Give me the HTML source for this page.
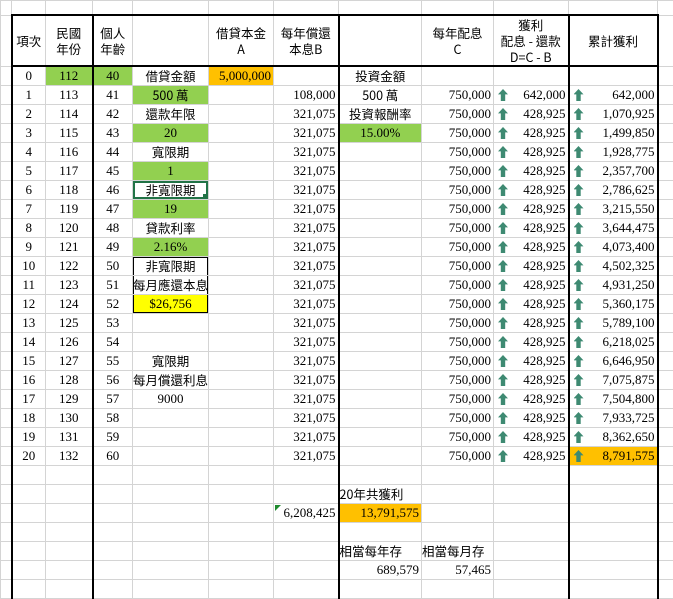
<!DOCTYPE html>
<html><head><meta charset="utf-8">
<style>
html,body{margin:0;padding:0;background:#fff;}
body{width:673px;height:593px;overflow:hidden;}
table{border-collapse:collapse;table-layout:fixed;width:673px;font-family:"Liberation Serif","Noto Sans CJK TC",serif;font-size:13px;color:#000;}
td{border:1px solid #d4d4d4;padding:0 2px;white-space:nowrap;overflow:hidden;height:18px;line-height:18px;position:relative;}
tr.top td{height:13px;line-height:13px;}
tr.h td{height:49px;line-height:16px;text-align:center;border-top:2px solid #000;border-bottom:2px solid #000;font-family:"Noto Sans CJK TC","Liberation Sans",sans-serif;font-size:12.5px;}
tr.h td:first-child,tr.h td:last-child{border-top:1px solid #d4d4d4;border-bottom:1px solid #d4d4d4;}
tr.h td:nth-child(2),tr.h td:nth-child(4),tr.h td:nth-child(8),tr.h td:nth-child(11),tr.h td:nth-child(12),
tr.d td:nth-child(2),tr.d td:nth-child(4),tr.d td:nth-child(8),tr.d td:nth-child(11),tr.d td:nth-child(12){border-left:2px solid #000;}
.c{text-align:center;}.r{text-align:right;}.l{text-align:left;}
.k{font-family:"Noto Sans CJK TC","Liberation Sans",sans-serif;font-size:12.5px;padding:0;}
.g{background:#92d050;}.o{background:#ffc000;}.y{background:#ffff00;}
.ar{position:absolute;left:4px;top:3px;width:10px;height:12px;background:#3e8a72;clip-path:polygon(50% 0,100% 45%,72% 45%,72% 100%,28% 100%,28% 45%,0 45%);}
.sel{box-shadow:inset 0 0 0 2px #217346;}
.sel i{position:absolute;right:0;bottom:0;width:5px;height:5px;background:#217346;}
.b1{box-shadow:inset 1px 1px 0 #000,inset -1px 0 0 #000;}
.b2{box-shadow:inset 1px 0 0 #000,inset -1px 0 0 #000;}
.b3{box-shadow:inset 1px -1px 0 #000,inset -1px 0 0 #000;}
.tri{position:absolute;left:1px;top:1px;width:0;height:0;border-top:6px solid #1e8a2e;border-right:6px solid transparent;}
</style></head><body>
<table>
<colgroup><col style="width:11px"><col style="width:34px"><col style="width:47px"><col style="width:40px"><col style="width:76px"><col style="width:65px"><col style="width:65px"><col style="width:83px"><col style="width:72px"><col style="width:75px"><col style="width:89px"><col style="width:16px"></colgroup>
<tr class="top"><td></td><td></td><td></td><td></td><td></td><td></td><td></td><td></td><td></td><td></td><td></td><td></td></tr>
<tr class="h"><td></td><td>項次</td><td>民國<br>年份</td><td>個人<br>年齡</td><td></td><td>借貸本金<br>A</td><td>每年償還<br>本息B</td><td></td><td>每年配息<br>C</td><td>獲利<br>配息 - 還款<br>D=C - B</td><td>累計獲利</td><td></td></tr>
<tr class="d"><td></td><td class="c">0</td><td class="c g">112</td><td class="c g">40</td><td class="c k">借貸金額</td><td class="r o">5,000,000</td><td></td><td class="c k">投資金額</td><td></td><td></td><td></td><td></td></tr>
<tr class="d"><td></td><td class="c">1</td><td class="c">113</td><td class="c">41</td><td class="c g k">500 萬</td><td></td><td class="r">108,000</td><td class="c k">500 萬</td><td class="r">750,000</td><td class="r"><span class="ar"></span>642,000</td><td class="r"><span class="ar"></span>642,000</td><td></td></tr>
<tr class="d"><td></td><td class="c">2</td><td class="c">114</td><td class="c">42</td><td class="c k">還款年限</td><td></td><td class="r">321,075</td><td class="c k">投資報酬率</td><td class="r">750,000</td><td class="r"><span class="ar"></span>428,925</td><td class="r"><span class="ar"></span>1,070,925</td><td></td></tr>
<tr class="d"><td></td><td class="c">3</td><td class="c">115</td><td class="c">43</td><td class="c g">20</td><td></td><td class="r">321,075</td><td class="c g">15.00%</td><td class="r">750,000</td><td class="r"><span class="ar"></span>428,925</td><td class="r"><span class="ar"></span>1,499,850</td><td></td></tr>
<tr class="d"><td></td><td class="c">4</td><td class="c">116</td><td class="c">44</td><td class="c k">寬限期</td><td></td><td class="r">321,075</td><td></td><td class="r">750,000</td><td class="r"><span class="ar"></span>428,925</td><td class="r"><span class="ar"></span>1,928,775</td><td></td></tr>
<tr class="d"><td></td><td class="c">5</td><td class="c">117</td><td class="c">45</td><td class="c g">1</td><td></td><td class="r">321,075</td><td></td><td class="r">750,000</td><td class="r"><span class="ar"></span>428,925</td><td class="r"><span class="ar"></span>2,357,700</td><td></td></tr>
<tr class="d"><td></td><td class="c">6</td><td class="c">118</td><td class="c">46</td><td class="c k sel">非寬限期<i></i></td><td></td><td class="r">321,075</td><td></td><td class="r">750,000</td><td class="r"><span class="ar"></span>428,925</td><td class="r"><span class="ar"></span>2,786,625</td><td></td></tr>
<tr class="d"><td></td><td class="c">7</td><td class="c">119</td><td class="c">47</td><td class="c g">19</td><td></td><td class="r">321,075</td><td></td><td class="r">750,000</td><td class="r"><span class="ar"></span>428,925</td><td class="r"><span class="ar"></span>3,215,550</td><td></td></tr>
<tr class="d"><td></td><td class="c">8</td><td class="c">120</td><td class="c">48</td><td class="c k">貸款利率</td><td></td><td class="r">321,075</td><td></td><td class="r">750,000</td><td class="r"><span class="ar"></span>428,925</td><td class="r"><span class="ar"></span>3,644,475</td><td></td></tr>
<tr class="d"><td></td><td class="c">9</td><td class="c">121</td><td class="c">49</td><td class="c g">2.16%</td><td></td><td class="r">321,075</td><td></td><td class="r">750,000</td><td class="r"><span class="ar"></span>428,925</td><td class="r"><span class="ar"></span>4,073,400</td><td></td></tr>
<tr class="d"><td></td><td class="c">10</td><td class="c">122</td><td class="c">50</td><td class="c k b1">非寬限期</td><td></td><td class="r">321,075</td><td></td><td class="r">750,000</td><td class="r"><span class="ar"></span>428,925</td><td class="r"><span class="ar"></span>4,502,325</td><td></td></tr>
<tr class="d"><td></td><td class="c">11</td><td class="c">123</td><td class="c">51</td><td class="c k b2">每月應還本息</td><td></td><td class="r">321,075</td><td></td><td class="r">750,000</td><td class="r"><span class="ar"></span>428,925</td><td class="r"><span class="ar"></span>4,931,250</td><td></td></tr>
<tr class="d"><td></td><td class="c">12</td><td class="c">124</td><td class="c">52</td><td class="c y b3">$26,756</td><td></td><td class="r">321,075</td><td></td><td class="r">750,000</td><td class="r"><span class="ar"></span>428,925</td><td class="r"><span class="ar"></span>5,360,175</td><td></td></tr>
<tr class="d"><td></td><td class="c">13</td><td class="c">125</td><td class="c">53</td><td></td><td></td><td class="r">321,075</td><td></td><td class="r">750,000</td><td class="r"><span class="ar"></span>428,925</td><td class="r"><span class="ar"></span>5,789,100</td><td></td></tr>
<tr class="d"><td></td><td class="c">14</td><td class="c">126</td><td class="c">54</td><td></td><td></td><td class="r">321,075</td><td></td><td class="r">750,000</td><td class="r"><span class="ar"></span>428,925</td><td class="r"><span class="ar"></span>6,218,025</td><td></td></tr>
<tr class="d"><td></td><td class="c">15</td><td class="c">127</td><td class="c">55</td><td class="c k">寬限期</td><td></td><td class="r">321,075</td><td></td><td class="r">750,000</td><td class="r"><span class="ar"></span>428,925</td><td class="r"><span class="ar"></span>6,646,950</td><td></td></tr>
<tr class="d"><td></td><td class="c">16</td><td class="c">128</td><td class="c">56</td><td class="c k">每月償還利息</td><td></td><td class="r">321,075</td><td></td><td class="r">750,000</td><td class="r"><span class="ar"></span>428,925</td><td class="r"><span class="ar"></span>7,075,875</td><td></td></tr>
<tr class="d"><td></td><td class="c">17</td><td class="c">129</td><td class="c">57</td><td class="c">9000</td><td></td><td class="r">321,075</td><td></td><td class="r">750,000</td><td class="r"><span class="ar"></span>428,925</td><td class="r"><span class="ar"></span>7,504,800</td><td></td></tr>
<tr class="d"><td></td><td class="c">18</td><td class="c">130</td><td class="c">58</td><td></td><td></td><td class="r">321,075</td><td></td><td class="r">750,000</td><td class="r"><span class="ar"></span>428,925</td><td class="r"><span class="ar"></span>7,933,725</td><td></td></tr>
<tr class="d"><td></td><td class="c">19</td><td class="c">131</td><td class="c">59</td><td></td><td></td><td class="r">321,075</td><td></td><td class="r">750,000</td><td class="r"><span class="ar"></span>428,925</td><td class="r"><span class="ar"></span>8,362,650</td><td></td></tr>
<tr class="d"><td></td><td class="c">20</td><td class="c">132</td><td class="c">60</td><td></td><td></td><td class="r">321,075</td><td></td><td class="r">750,000</td><td class="r"><span class="ar"></span>428,925</td><td class="r o"><span class="ar"></span>8,791,575</td><td></td></tr>
<tr class="d"><td></td><td></td><td></td><td></td><td></td><td></td><td></td><td></td><td></td><td></td><td></td><td></td></tr>
<tr class="d"><td></td><td></td><td></td><td></td><td></td><td></td><td></td><td class="l k">20年共獲利</td><td></td><td></td><td></td><td></td></tr>
<tr class="d"><td></td><td></td><td></td><td></td><td></td><td></td><td class="r"><span class="tri"></span>6,208,425</td><td class="r o">13,791,575</td><td></td><td></td><td></td><td></td></tr>
<tr class="d"><td></td><td></td><td></td><td></td><td></td><td></td><td></td><td></td><td></td><td></td><td></td><td></td></tr>
<tr class="d"><td></td><td></td><td></td><td></td><td></td><td></td><td></td><td class="l k">相當每年存</td><td class="l k">相當每月存</td><td></td><td></td><td></td></tr>
<tr class="d"><td></td><td></td><td></td><td></td><td></td><td></td><td></td><td class="r">689,579</td><td class="r">57,465</td><td></td><td></td><td></td></tr>
<tr class="d"><td></td><td></td><td></td><td></td><td></td><td></td><td></td><td></td><td></td><td></td><td></td><td></td></tr>
</table>
</body></html>
